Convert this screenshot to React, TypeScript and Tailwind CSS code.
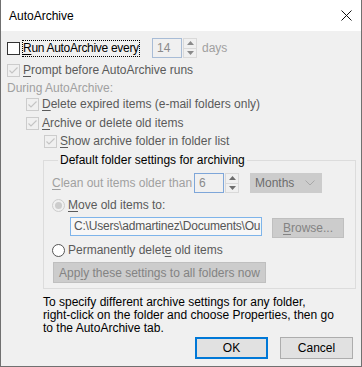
import React from "react";

function Check({ checked = false, disabled = false }: { checked?: boolean; disabled?: boolean }) {
  return (
    <span
      className={
        "w-[13px] h-[13px] shrink-0 border flex items-center justify-center " +
        (disabled ? "border-[#cccccc] bg-[#f0f0f0]" : "border-[#333333] bg-white")
      }
    >
      {checked && (
        <svg width="11" height="11" viewBox="0 0 11 11">
          <polyline points="1.5,5.5 4,8 9.5,2.5" fill="none" stroke={disabled ? "#c4c4c4" : "#333"} strokeWidth="1.1" />
        </svg>
      )}
    </span>
  );
}

function Radio({ checked = false, disabled = false }: { checked?: boolean; disabled?: boolean }) {
  return (
    <span
      className={
        "w-[13px] h-[13px] shrink-0 rounded-full border flex items-center justify-center " +
        (disabled ? "border-[#cccccc] bg-[#f0f0f0]" : "border-[#555555] bg-white")
      }
    >
      {checked && <span className={"w-[7px] h-[7px] rounded-full " + (disabled ? "bg-[#cccccc]" : "bg-[#333]")} />}
    </span>
  );
}

function Spin({ dark = false }: { dark?: boolean }) {
  const c = dark ? "#6d6d6d" : "#8a8a8a";
  return (
    <span className="w-[14px] h-[20px] flex flex-col border border-[#d9d9d9] bg-[#f0f0f0]">
      <span className="flex-1 flex items-center justify-center border-b border-[#d9d9d9]">
        <svg width="7" height="4" viewBox="0 0 7 4">
          <polygon points="0,4 3.5,0 7,4" fill={c} />
        </svg>
      </span>
      <span className="flex-1 flex items-center justify-center">
        <svg width="7" height="4" viewBox="0 0 7 4">
          <polygon points="0,0 3.5,4 7,0" fill={c} />
        </svg>
      </span>
    </span>
  );
}

const U = ({ children }: { children: React.ReactNode }) => <span className="underline underline-offset-[2px]">{children}</span>;

export default function App() {
  return (
    <div className="w-[362px] h-[367px] bg-[#f0f0f0] border-x border-b border-[#707070] font-['Liberation_Sans',Arial,sans-serif] text-[12px] leading-[16px] text-black flex flex-col overflow-hidden">
      {/* Title bar */}
      <div className="h-[31px] shrink-0 bg-white flex items-center justify-between pl-[8px] pr-[9px]">
        <span className="leading-[16px]">AutoArchive</span>
        <svg width="11" height="11" viewBox="0 0 11 11">
          <line x1="0.5" y1="0.5" x2="10.5" y2="10.5" stroke="#111" strokeWidth="1" />
          <line x1="10.5" y1="0.5" x2="0.5" y2="10.5" stroke="#111" strokeWidth="1" />
        </svg>
      </div>

      {/* Row 1 */}
      <div className="mt-[7px] h-[20px] flex items-center pl-[6px]">
        <Check />
        <span className="ml-[2px] h-[17px] w-[118px] border border-dotted border-black leading-[15px] whitespace-nowrap tracking-[-0.3px]">
          <U>R</U>un AutoArchive every
        </span>
        <span className="ml-[12px] w-[30px] h-[20px] border border-[#a8bcd6] bg-[#f0f0f0] text-[#8a8a8a] pl-[4px] leading-[18px]">14</span>
        <span className="ml-[1px]">
          <Spin />
        </span>
        <span className="ml-[5px] text-[#a0a0a0]">days</span>
      </div>

      {/* Prompt */}
      <div className="mt-[4px] h-[16px] flex items-center pl-[6px]">
        <Check checked disabled />
        <span className="ml-[3px] text-[#5a5a5a]">
          <U>P</U>rompt before AutoArchive runs
        </span>
      </div>

      <div className="mt-[2px] h-[16px] flex items-center pl-[6px] text-[#a0a0a0]">During AutoArchive:</div>

      <div className="h-[16px] flex items-center pl-[25px]">
        <Check checked disabled />
        <span className="ml-[3px] text-[#5a5a5a]">
          <U>D</U>elete expired items (e-mail folders only)
        </span>
      </div>

      <div className="mt-[3px] h-[16px] flex items-center pl-[25px]">
        <Check checked disabled />
        <span className="ml-[3px] text-[#5a5a5a]">
          <U>A</U>rchive or delete old items
        </span>
      </div>

      <div className="mt-[2px] h-[16px] flex items-center pl-[43px]">
        <Check checked disabled />
        <span className="ml-[3px] text-[#5a5a5a]">
          <U>S</U>how archive folder in folder list
        </span>
      </div>

      {/* Group */}
      <fieldset className="mt-[3px] ml-[42px] w-[313px] border border-[#dcdcdc] pl-[8px] pb-[5px] border-t">
        <legend className="ml-[6px] px-[2px] leading-[16px] text-black">Default folder settings for archiving</legend>

        <div className="mt-[5px] h-[20px] flex items-center">
          <span className="text-[#a0a0a0] w-[142px] whitespace-nowrap">
            <U>C</U>lean out items older than
          </span>
          <span className="ml-[0px] w-[30px] h-[20px] border border-[#7ea6d9] bg-[#f0f0f0] text-[#8a8a8a] pl-[4px] leading-[18px]">6</span>
          <span className="ml-[1px]">
            <Spin dark />
          </span>
          <span className="ml-[11px] w-[72px] h-[20px] bg-[#cccccc] border border-[#cccccc] text-[#6d6d6d] flex items-center justify-between pl-[4px] pr-[6px]">
            <span>Months</span>
            <svg width="10" height="6" viewBox="0 0 10 6">
              <polyline points="0.5,0.5 5,5 9.5,0.5" fill="none" stroke="#a8a8a8" strokeWidth="1" />
            </svg>
          </span>
        </div>

        <div className="mt-[4px] h-[16px] flex items-center">
          <Radio checked disabled />
          <span className="ml-[3px] text-[#5a5a5a]">
            <U>M</U>ove old items to:
          </span>
        </div>

        <div className="mt-[4px] h-[21px] flex items-start">
          <span className="ml-[18px] w-[192px] h-[19px] border border-[#7eb4ea] bg-[#f7f7f7] text-[#555] pl-[3px] leading-[17px] whitespace-nowrap overflow-hidden tracking-[-0.2px]">
            C:\Users\admartinez\Documents\Ou
          </span>
          <span className="ml-[10px] mt-[1px] w-[72px] h-[20px] bg-[#cccccc] border border-[#bfbfbf] text-[#838383] flex items-center justify-center">
            <span>
              <U>B</U>rowse...
            </span>
          </span>
        </div>

        <div className="mt-[4px] h-[16px] flex items-center">
          <Radio />
          <span className="ml-[3px] text-[#5a5a5a]">
            Permanently delet<U>e</U> old items
          </span>
        </div>

        <div className="mt-[4px] flex">
          <span className="ml-[1px] w-[213px] h-[21px] bg-[#cccccc] border border-[#bfbfbf] text-[#838383] flex items-center justify-center">
            <span>
              App<U>l</U>y these settings to all folders now
            </span>
          </span>
        </div>
      </fieldset>

      <div className="mt-[7px] ml-[42px] leading-[13px] text-black">
        To specify different archive settings for any folder,
        <br />
        right-click on the folder and choose Properties, then go
        <br />
        to the AutoArchive tab.
      </div>

      <div className="mt-[2px] flex justify-end pr-[8px] gap-[12px]">
        <button className="w-[73px] h-[22px] bg-[#e1e1e1] border-2 border-[#0078d7] text-black leading-[16px]">OK</button>
        <button className="w-[73px] h-[22px] bg-[#e1e1e1] border border-[#adadad] text-black leading-[16px]">Cancel</button>
      </div>
    </div>
  );
}
